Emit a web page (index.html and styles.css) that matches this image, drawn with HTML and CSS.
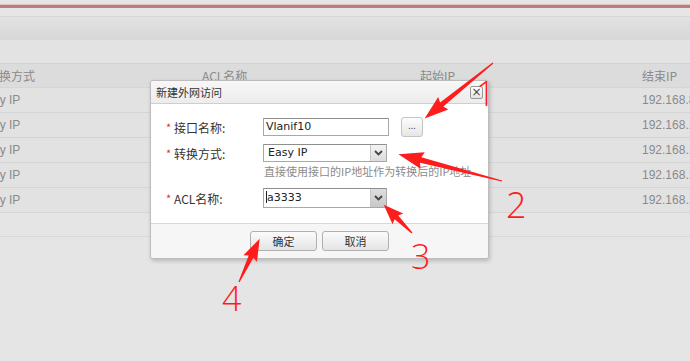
FILE: index.html
```html
<!DOCTYPE html>
<html lang="zh-CN">
<head>
  <meta charset="UTF-8" />
  <title>新建外网访问</title>
  <link rel="stylesheet" href="styles.css">
</head>
<body>
  <div class="page">
    <div class="top-strip"><div class="accent"></div></div>
    <div class="toolbar"></div>
    <div class="filter-bar"></div>

    <!-- background table (masked) -->
    <div class="table">
      <div class="trow thead">
        <div class="c1 head-c1">转换方式</div>
        <div class="c2">ACL名称</div>
        <div class="c3">起始IP</div>
        <div class="c4">结束IP</div>
      </div>
      <div class="trow"><div class="c1">Easy IP</div><div class="c2"></div><div class="c3"></div><div class="c4">192.168.8.254</div></div>
      <div class="trow"><div class="c1">Easy IP</div><div class="c2"></div><div class="c3"></div><div class="c4">192.168.10.254</div></div>
      <div class="trow"><div class="c1">Easy IP</div><div class="c2"></div><div class="c3"></div><div class="c4">192.168.11.254</div></div>
      <div class="trow"><div class="c1">Easy IP</div><div class="c2"></div><div class="c3"></div><div class="c4">192.168.12.254</div></div>
      <div class="trow"><div class="c1">Easy IP</div><div class="c2"></div><div class="c3"></div><div class="c4">192.168.13.254</div></div>
      <div class="pager"></div>
    </div>
  </div>

  <!-- Dialog -->
  <div class="dialog">
    <div class="dialog-title">
      <span>新建外网访问</span>
      <span class="close-btn">×</span>
    </div>
    <div class="dialog-body">
      <div class="row">
        <span class="req">*</span><label>接口名称:</label>
        <div class="field text-field">Vlanif10</div>
        <span class="dots-btn">...</span>
      </div>
      <div class="row">
        <span class="req">*</span><label>转换方式:</label>
        <div class="field select-field"><span class="val">Easy IP</span><span class="drop"><svg width="9" height="6" viewBox="0 0 9 6"><path d="M1 1 L4.5 4.5 L8 1" fill="none" stroke="#444" stroke-width="1.8"/></svg></span></div>
      </div>
      <div class="hint">直接使用接口的IP地址作为转换后的IP地址</div>
      <div class="row row-acl">
        <span class="req">*</span><label>ACL名称:</label>
        <div class="field select-field acl"><span class="val"><i class="caret"></i>a3333</span><span class="drop dark"><svg width="9" height="6" viewBox="0 0 9 6"><path d="M1 1 L4.5 4.5 L8 1" fill="none" stroke="#444" stroke-width="1.8"/></svg></span></div>
      </div>
    </div>
    <div class="dialog-foot">
      <button class="btn">确定</button>
      <button class="btn">取消</button>
    </div>
  </div>

  <!-- annotation arrows -->
  <svg class="marks" width="690" height="361" viewBox="0 0 690 361">
    <g fill="#ff1c1c">
      <polygon transform="translate(493,63) rotate(141)" points="0,-0.6 66,-2.6 64,-8 88,0 64,8 66,2.6 0,0.6"/>
      <polygon transform="translate(502,181) rotate(194.5)" points="0,-0.6 84,-2.8 82,-8.5 107,0 82,8.5 84,2.8 0,0.6"/>
      <polygon transform="translate(412,233) rotate(225)" points="0,-0.6 22,-2.6 20,-7.5 40,0 20,7.5 22,2.6 0,0.6"/>
      <polygon transform="translate(239,282) rotate(-64.5)" points="0,-0.6 28,-2.6 26,-7.5 48,0 26,7.5 28,2.6 0,0.6"/>
    </g>
  </svg>
  <span class="num n1">1</span>
  <span class="num n2">2</span>
  <span class="num n3">3</span>
  <span class="num n4">4</span>
</body>
</html>
```

FILE: styles.css
```css
body {
  margin: 0;
  width: 690px;
  height: 361px;
  overflow: hidden;
  background-color: #e5e5e5;
  font-family: "Liberation Sans", "Noto Sans CJK SC", sans-serif;
  position: relative;
}
.page {
  width: 690px;
}
.top-strip {
  height: 17px;
  padding-top: 4px;
  box-sizing: border-box;
  background: #e6e6e6;
  border-bottom: 1px solid #d6d6d6;
}
.accent {
  height: 3px;
  background: #c27a7a;
  border-top: 1px solid #dcc4c4;
}
.toolbar {
  height: 22px;
  background: linear-gradient(#e2e2e2, #d7d7d7);
  border-bottom: 1px solid #d8d8d8;
}
.filter-bar {
  height: 23px;
  background: #e3e3e3;
  border-bottom: 1px solid #d2d2d2;
}
.table {
  font-size: 12px;
  color: #8a8a8a;
}
.trow {
  display: grid;
  grid-template-columns: 190px 220px 222px 58px;
  height: 24px;
  align-items: center;
  border-bottom: 1px solid #d5d5d5;
  background: #e2e2e2;
  white-space: nowrap;
  overflow: hidden;
}
.thead {
  height: 23px;
  background: #dcdcdc;
  font-family: "Noto Sans CJK SC", sans-serif;
}
.trow .c1 {
  margin-left: -21px;
}
.thead .head-c1 {
  margin-left: -13px;
}
.c2 {
  padding-left: 12px;
}
.c3 {
  padding-left: 10px;
}
.c4 {
  padding-left: 10px;
}
.pager {
  height: 23px;
  border-bottom: 1px solid #d8d8d8;
}

/* dialog */
.dialog {
  position: absolute;
  left: 150px;
  top: 80px;
  width: 337px;
  background: #fff;
  border: 1px solid #bdbdbd;
  border-radius: 3px;
  box-shadow: 1px 2px 4px rgba(0, 0, 0, 0.2);
  font-family: "Noto Sans CJK SC", sans-serif;
  font-size: 12px;
  color: #333;
}
.dialog-title {
  height: 22px;
  display: flex;
  align-items: center;
  justify-content: space-between;
  padding: 0 5px 0 5px;
  background: linear-gradient(#f7f7f7, #ececec);
  border-bottom: 1px solid #cfcfcf;
  border-radius: 3px 3px 0 0;
  font-size: 11px;
  color: #333;
}
.close-btn {
  width: 11px;
  height: 11px;
  border: 1px solid #999;
  border-radius: 2px;
  background: linear-gradient(#fff, #e4e4e4);
  font-family: "DejaVu Sans", sans-serif;
  font-size: 12px;
  line-height: 10px;
  text-align: center;
  color: #444;
}
.dialog-body {
  padding: 14px 0 15px 15px;
}
.row {
  display: flex;
  align-items: center;
  height: 18px;
  margin-bottom: 8px;
}
.req {
  color: #e03030;
  width: 8px;
  font-size: 11px;
}
.row label {
  width: 89px;
}
.field {
  width: 122px;
  height: 16px;
  border: 1px solid #a8a8a8;
  border-top-color: #8e8e8e;
  font-family: "DejaVu Sans", sans-serif;
  font-size: 11px;
  line-height: 16px;
  padding-left: 2px;
  color: #222;
}
.dots-btn {
  margin-left: 12px;
  width: 20px;
  height: 18px;
  border: 1px solid #c4c4c4;
  border-radius: 3px;
  background: linear-gradient(#fdfdfd, #e6e6e6);
  font-size: 9px;
  line-height: 16px;
  text-align: center;
  color: #555;
}
.select-field {
  display: flex;
  justify-content: space-between;
  padding-left: 0;
}
.select-field .val {
  padding-left: 4px;
}
.drop {
  width: 15px;
  border-left: 1px solid #c8c8c8;
  background: linear-gradient(#f4f4f4, #dcdcdc);
  display: flex;
  align-items: center;
  justify-content: center;
}
.drop.dark {
  background: linear-gradient(#dedede, #c8c8c8);
}
.acl {
  height: 18px;
  line-height: 18px;
}
.acl .val {
  padding-left: 2px;
}
.caret {
  display: inline-block;
  width: 1px;
  height: 12px;
  background: #222;
  vertical-align: -2px;
}
.hint {
  margin: -7px 0 0 98px;
  height: 18px;
  font-size: 11px;
  color: #8a8a8a;
  white-space: nowrap;
}
.row-acl {
  height: 20px;
  margin: 7px 0 0;
}
.dialog-foot {
  height: 35px;
  border-top: 1px solid #d8d8d8;
  background: #f6f6f6;
  border-radius: 0 0 3px 3px;
  display: flex;
  justify-content: center;
  align-items: flex-start;
  gap: 5px;
  padding-top: 7px;
  box-sizing: border-box;
}
.btn {
  width: 67px;
  height: 20px;
  border: 1px solid #b0b0b0;
  border-radius: 3px;
  background: linear-gradient(#fbfbfb, #e5e5e5);
  font-family: "Noto Sans CJK SC", sans-serif;
  font-size: 11px;
  color: #333;
  padding: 0;
}

/* annotations */
.marks {
  position: absolute;
  left: 0;
  top: 0;
}
.num {
  position: absolute;
  font-family: "Open Sans", "DejaVu Sans", sans-serif;
  font-weight: 300;
  font-size: 34px;
  line-height: 1;
  color: #ff1c1c;
}
.n1 { left: 476px; top: 76px; }
.n2 { left: 506px; top: 187px; font-size: 36px; }
.n3 { left: 411px; top: 239px; }
.n4 { left: 222px; top: 281px; }
```
